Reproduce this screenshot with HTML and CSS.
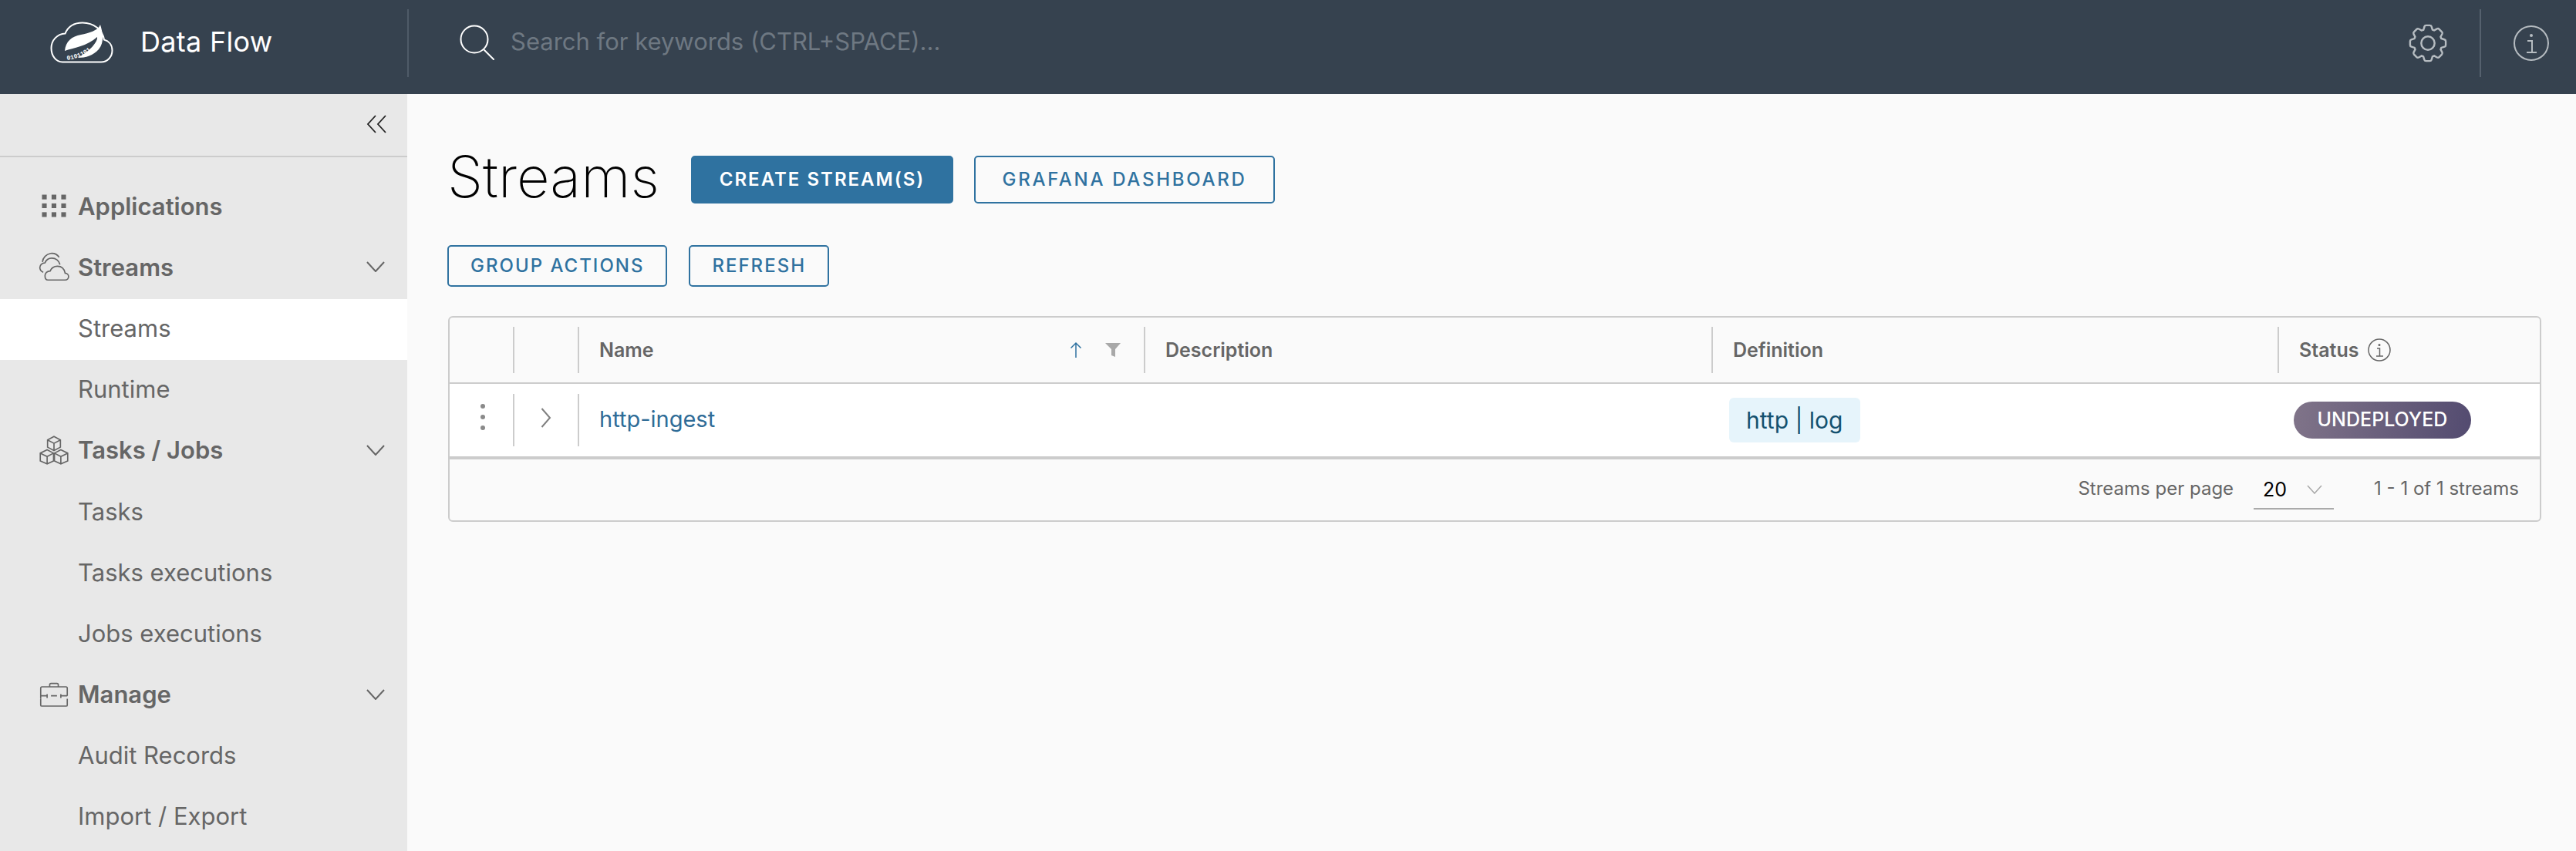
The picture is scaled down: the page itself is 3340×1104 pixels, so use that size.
FILE: index.html
```html
<!DOCTYPE html>
<html lang="en">
<head>
    <meta charset="UTF-8">
    <meta name="viewport" content="width=device-width, initial-scale=1.0">
    <title>Data Flow - Streams</title>
    <link rel="stylesheet" href="styles.css">
</head>
<body>
    <header class="topbar">
        <div class="brand">
            <svg class="brandLogo" viewBox="0 0 82 54" fill="none">
                <path d="M16 52.500H66C74 52.500 80.500 46 80.500 37.500C80.500 30 76 25 70 23.500C68 11 57 1.500 42 1.500C31 1.500 23 7 19.500 15.500C9 16 1.500 24.500 1.500 34.500C1.500 45 8 52.500 16 52.500Z" stroke="#fff" stroke-width="2"/>
                <path d="M65 4C62 12 50 15 40 17C28 19 20 26 19 38C30 34 48 32 61 20C62 26 52 38 36 47C46 47 56 44 63 36C71 26 68 14 65 4Z" fill="#fff"/>
                <path id="logoCurve" d="M22 50C36 48 52 42 63 27"/>
                <text class="logoBits"><textPath href="#logoCurve">0101101</textPath></text>
            </svg>
            <span class="brandName">Data Flow</span>
        </div>
        <div class="search">
            <svg class="searchIcon" viewBox="0 0 46 46" fill="none" stroke="#fff" stroke-width="2">
                <circle cx="19" cy="19" r="17.500"/>
                <path d="M32 33L44 45" stroke-linecap="round"/>
            </svg>
            <span class="searchText">Search for keywords (CTRL+SPACE)...</span>
        </div>
        <div class="topIcons">
            <div class="topIcon">
                <svg class="gearIcon" viewBox="0 0 36 36" fill="none" stroke="#b6bcc1" stroke-width="1.700">
                    <circle cx="18" cy="18" r="6"/>
                    <path d="M32.800 14.700L30 13.800L29.400 12.300L30.800 9.700C31.100 9.100 31 8.300 30.500 7.800L28.100 5.400C27.600 4.900 26.800 4.800 26.200 5.100L23.600 6.500L22.100 5.900L21.200 3.100C21 2.500 20.400 2 19.700 2H16.300C15.600 2 15 2.500 14.900 3.200L14 6C13.400 6.100 12.900 6.300 12.400 6.600L9.800 5.200C9.200 4.900 8.400 5 7.900 5.500L5.500 7.900C5 8.400 4.900 9.200 5.200 9.800L6.500 12.300C6.300 12.800 6.100 13.400 5.900 13.900L3.100 14.800C2.500 15 2 15.600 2 16.300V19.700C2 20.400 2.500 21 3.200 21.200L6 22.100L6.600 23.600L5.200 26.200C4.900 26.800 5 27.600 5.500 28.100L7.900 30.500C8.400 31 9.200 31.100 9.800 30.800L12.400 29.400L13.900 30L14.800 32.900C15 33.500 15.600 34 16.300 34H19.700C20.400 34 21 33.500 21.200 32.900L22.100 30L23.600 29.400L26.200 30.800C26.800 31.100 27.600 31 28.100 30.500L30.500 28.100C31 27.600 31.100 26.800 30.800 26.200L29.400 23.600L30 22.100L32.900 21.200C33.500 21 34 20.400 34 19.700V16.300C34 15.600 33.500 14.900 32.800 14.700Z"/>
                </svg>
            </div>
            <div class="topIcon infoSlot">
                <svg class="infoIcon" viewBox="0 0 46 46" fill="none" stroke="#b6bcc1" stroke-width="2">
                    <circle cx="23" cy="23" r="22"/>
                    <path d="M18 20H24V35M17 35H30"/>
                    <circle cx="23" cy="13" r="2" fill="#b6bcc1" stroke="none"/>
                </svg>
            </div>
        </div>
    </header>

    <div class="layout">
        <nav class="sidebar">
            <div class="collapseRow">
                <svg class="collapseIcon" viewBox="0 0 26 24" fill="none" stroke="#222" stroke-width="1.800">
                    <path d="M12 1L2 12L12 23M25 1L15 12L25 23"/>
                </svg>
            </div>
            <div class="navList">
                <div class="navItem navGroup">
                    <svg class="navIcon" viewBox="0 0 36 36" fill="#666">
                        <rect x="4" y="5" width="5.500" height="5.500"/><rect x="15.200" y="5" width="5.500" height="5.500"/><rect x="26.500" y="5" width="5.500" height="5.500"/>
                        <rect x="4" y="15.200" width="5.500" height="5.500"/><rect x="15.200" y="15.200" width="5.500" height="5.500"/><rect x="26.500" y="15.200" width="5.500" height="5.500"/>
                        <rect x="4" y="25.500" width="5.500" height="5.500"/><rect x="15.200" y="25.500" width="5.500" height="5.500"/><rect x="26.500" y="25.500" width="5.500" height="5.500"/>
                    </svg>
                    <span>Applications</span>
                </div>
                <div class="navItem navGroup">
                    <svg class="navIcon" viewBox="0 0 36 36" fill="none" stroke="#666" stroke-width="1.500">
                        <path d="M11 33.500H31C33.500 33.500 35 31.500 35 29.500C35 27.500 33.500 25.500 31 25.500C30 20.500 26.500 17.500 22 17.500C18 17.500 15 19.500 13.500 23C10 23 7.500 25.500 7.500 28.500C7.500 31.500 9 33.500 11 33.500Z"/>
                        <path d="M5.500 24.500C3 23.500 1.500 21.500 1.500 19C1.500 16 4 13.500 7.500 13.500C9 9.500 12 8 15.500 8C20 8 24 11 25 15.500"/>
                        <path d="M4.500 12.500C5 7.500 9 3.500 14 2.500C18.500 2 22 4 24 7"/>
                    </svg>
                    <span>Streams</span>
                    <svg class="navChevron" viewBox="0 0 24 14" fill="none" stroke="#666" stroke-width="2"><path d="M1 1L12 13L23 1"/></svg>
                </div>
                <div class="navItem navSelected"><span>Streams</span></div>
                <div class="navItem"><span>Runtime</span></div>
                <div class="navItem navGroup">
                    <svg class="navIcon" viewBox="0 0 36 36" fill="none" stroke="#666" stroke-width="1.500">
                        <path d="M18 2L25.500 6V14.500L18 18.500L10.500 14.500V6Z"/>
                        <path d="M10.500 6L18 10L25.500 6M18 10V18.500"/>
                        <path d="M10 17.500L17.500 21.500V30.500L10 34L2 30.500V21.500Z"/>
                        <path d="M2 21.500L10 25.500L17.500 21.500M10 25.500V34"/>
                        <path d="M26 17.500L34 21.500V30.500L26 34L18.500 30.500V21.500Z"/>
                        <path d="M18.500 21.500L26 25.500L34 21.500M26 25.500V34"/>
                    </svg>
                    <span>Tasks / Jobs</span>
                    <svg class="navChevron" viewBox="0 0 24 14" fill="none" stroke="#666" stroke-width="2"><path d="M1 1L12 13L23 1"/></svg>
                </div>
                <div class="navItem"><span>Tasks</span></div>
                <div class="navItem"><span>Tasks executions</span></div>
                <div class="navItem"><span>Jobs executions</span></div>
                <div class="navItem navGroup">
                    <svg class="navIcon" viewBox="0 0 36 36" fill="none" stroke="#666" stroke-width="1.500">
                        <path d="M13 9V6.500C13 5.500 13.500 5 14.500 5H21.500C22.500 5 23 5.500 23 6.500V9"/>
                        <path d="M2.500 23V10.500C2.500 9.500 3 9 4 9H32C33 9 33.500 9.500 33.500 10.500V19.500"/>
                        <path d="M2.500 19.500H10M10 17.500V22M14.500 19.500H21.500M26 17.500V22M26 19.500H33.500"/>
                        <path d="M2.500 23V30.500C2.500 31 3 31.500 4 31.500H32C33 31.500 33.500 31 33.500 30.500V23"/>
                    </svg>
                    <span>Manage</span>
                    <svg class="navChevron" viewBox="0 0 24 14" fill="none" stroke="#666" stroke-width="2"><path d="M1 1L12 13L23 1"/></svg>
                </div>
                <div class="navItem"><span>Audit Records</span></div>
                <div class="navItem"><span>Import / Export</span></div>
            </div>
        </nav>

        <main class="content">
            <div class="titleRow">
                <h1 class="pageTitle">Streams</h1>
                <button class="btn btnPrimary">CREATE STREAM(S)</button>
                <button class="btn btnOutline btnWide">GRAFANA DASHBOARD</button>
            </div>
            <div class="actionRow">
                <button class="btn btnOutline btnSmall">GROUP ACTIONS</button>
                <button class="btn btnOutline btnSmall">REFRESH</button>
            </div>

            <div class="grid">
                <div class="gridRow gridHead">
                    <div class="cell"></div>
                    <div class="cell cellRule"></div>
                    <div class="cell cellRule">
                        <span class="headLabel">Name</span>
                        <svg class="sortIcon" viewBox="0 0 16 22" fill="none" stroke="#2f72a0" stroke-width="1.500"><path d="M8 21V2M1.500 8.500L8 2L14.500 8.500"/></svg>
                        <svg class="filterIcon" viewBox="0 0 20 18" fill="#a8a8a8"><path d="M0 0H20L13 8V18L8 16V8Z"/></svg>
                    </div>
                    <div class="cell cellRule"><span class="headLabel">Description</span></div>
                    <div class="cell cellRule"><span class="headLabel">Definition</span></div>
                    <div class="cell cellRule">
                        <span class="headLabel">Status</span>
                        <svg class="statusInfo" viewBox="0 0 30 30" fill="none" stroke="#666" stroke-width="1.500">
                            <circle cx="15" cy="15" r="14"/>
                            <path d="M12 13H15.500V23M11 23H20"/>
                            <circle cx="15" cy="8.500" r="1.500" fill="#666" stroke="none"/>
                        </svg>
                    </div>
                </div>
                <div class="gridRow gridBody">
                    <div class="cell cellDots"><i></i><i></i><i></i></div>
                    <div class="cell cellRule cellExpand">
                        <svg class="expandIcon" viewBox="0 0 14 26" fill="none" stroke="#808080" stroke-width="2"><path d="M1.500 1L12 13L1.500 25"/></svg>
                    </div>
                    <div class="cell cellRule"><a class="streamLink">http-ingest</a></div>
                    <div class="cell"></div>
                    <div class="cell cellChip"><span class="dslChip">http | log</span></div>
                    <div class="cell"><span class="statusBadge">UNDEPLOYED</span></div>
                </div>
                <div class="gridFoot">
                    <span class="footText">Streams per page</span>
                    <div class="pageSelect">
                        <span>20</span>
                        <svg class="selectChevron" viewBox="0 0 20 12" fill="none" stroke="#a8a8a8" stroke-width="1.500"><path d="M1 1L10 11L19 1"/></svg>
                    </div>
                    <span class="footText">1 - 1 of 1 streams</span>
                </div>
            </div>
        </main>
    </div>
</body>
</html>
```

FILE: styles.css
```css
* {
    box-sizing: border-box;
}
body {
    margin: 0;
    padding: 0;
    height: 100vh;
    overflow: hidden;
    font-family: "Inter", "Liberation Sans", sans-serif;
    background-color: #fafafa;
}

/* top bar */
.topbar {
    display: flex;
    align-items: center;
    height: 122px;
    padding-bottom: 10px;
    background-color: #36424f;
}
.brand {
    display: flex;
    align-items: center;
    width: 530px;
    height: 88px;
    padding-left: 65px;
    border-right: 2px solid #4f5b68;
}
.brandLogo {
    width: 82px;
    height: 54px;
    margin-bottom: 2px;
}
.logoBits {
    font-family: "Liberation Mono", monospace;
    font-size: 8px;
    font-weight: bold;
    fill: #fff;
}
.brandName {
    margin-left: 35px;
    margin-bottom: 4px;
    color: #fff;
    font-size: 36px;
    letter-spacing: 0.3px;
}
.search {
    display: flex;
    align-items: center;
    flex: 1;
    padding-left: 66px;
}
.searchIcon {
    width: 46px;
    height: 46px;
    margin-bottom: 2px;
}
.searchText {
    margin-left: 20px;
    margin-bottom: 6px;
    color: #6e7882;
    font-size: 31px;
}
.topIcons {
    display: flex;
    align-items: center;
    height: 88px;
}
.topIcon {
    display: flex;
    align-items: center;
    justify-content: center;
    width: 76px;
    margin-right: 29px;
}
.infoSlot {
    width: 125px;
    height: 88px;
    margin-right: 0;
    padding: 0 0 0 6px;
    border-left: 2px solid #56616e;
}
.gearIcon {
    width: 52px;
    height: 52px;
}
.infoIcon {
    width: 46px;
    height: 46px;
}

/* sidebar */
.layout {
    display: flex;
    height: 982px;
}
.sidebar {
    width: 528px;
    background-color: #e8e8e8;
    flex-shrink: 0;
}
.collapseRow {
    display: flex;
    align-items: center;
    justify-content: flex-end;
    height: 82px;
    padding-right: 27px;
    padding-bottom: 2px;
    border-bottom: 2px solid #cccccc;
}
.collapseIcon {
    width: 26px;
    height: 24px;
}
.navList {
    padding-top: 25.5px;
}
.navItem {
    display: flex;
    align-items: center;
    height: 79.2px;
    padding-left: 101px;
    padding-bottom: 4px;
    color: #666;
    font-size: 31px;
}
.navGroup {
    padding-left: 50px;
    padding-right: 29px;
    font-weight: 600;
}
.navSelected {
    background-color: #fff;
}
.navIcon {
    width: 40px;
    height: 40px;
    margin-right: 11px;
    flex-shrink: 0;
}
.navChevron {
    width: 24px;
    height: 14px;
    margin-left: auto;
}

/* main */
.content {
    flex: 1;
    padding: 0 45px 0 52px;
}
.titleRow {
    display: flex;
    align-items: center;
    height: 62px;
    margin-top: 80px;
}
.pageTitle {
    margin: 0 42px 9px 0;
    width: 274px;
    color: #000;
    font-size: 74px;
    font-weight: 200;
    white-space: nowrap;
}
.btn {
    display: flex;
    align-items: center;
    justify-content: center;
    height: 62px;
    padding: 0 0 2px;
    border-radius: 5px;
    font-family: inherit;
    font-size: 24px;
    font-weight: 500;
    letter-spacing: 2px;
    white-space: nowrap;
}
.btnPrimary {
    width: 340px;
    margin-right: 27px;
    color: #fff;
    background-color: #2f72a0;
    border: 2px solid #2f72a0;
    font-weight: 600;
}
.btnOutline {
    color: #2f72a0;
    background-color: transparent;
    border: 2px solid #2f72a0;
}
.btnWide {
    width: 390px;
    letter-spacing: 2.7px;
}
.actionRow {
    display: flex;
    gap: 28px;
    margin-top: 54px;
}
.btnSmall {
    height: 54px;
    padding: 0 28px 2px;
}

/* table */
.grid {
    margin-top: 38px;
    margin-left: 1px;
    border: 2px solid #cccccc;
    border-radius: 6px;
}
.gridRow {
    display: grid;
    grid-template-columns: 82px 84px 734px 736px 734px 1fr;
    align-items: center;
}
.gridHead {
    height: 86px;
    border-bottom: 2px solid #cccccc;
}
.gridBody {
    height: 98px;
    background-color: #fff;
    border-bottom: 4px solid #cccccc;
}
.cell {
    display: flex;
    align-items: center;
    height: 60px;
    padding-left: 26px;
}
.gridBody .cell {
    height: 68px;
}
.cellRule {
    border-left: 2px solid #cccccc;
}
.headLabel {
    color: #666;
    font-size: 25px;
    font-weight: 600;
}
.sortIcon {
    width: 16px;
    height: 22px;
    margin-left: auto;
}
.filterIcon {
    width: 20px;
    height: 18px;
    margin-left: 30px;
    margin-right: 30px;
}
.statusInfo {
    width: 30px;
    height: 30px;
    margin-left: 12px;
}
.gridBody .cellDots {
    flex-direction: column;
    justify-content: center;
    gap: 8px;
    padding-left: 40px;
    padding-bottom: 8px;
    align-items: flex-start;
}
.cellDots i {
    width: 6px;
    height: 6px;
    border-radius: 50%;
    background-color: #8a8a8a;
}
.gridBody .cellExpand {
    padding-left: 34px;
    padding-bottom: 6px;
}
.expandIcon {
    width: 14px;
    height: 26px;
}
.streamLink {
    margin-bottom: 4px;
    color: #2f6c97;
    font-size: 29px;
}
.gridBody .cellChip {
    padding-left: 23px;
}
.dslChip {
    display: flex;
    align-items: center;
    height: 58px;
    padding: 0 22px;
    border-radius: 6px;
    color: #14516f;
    background-color: #e6f4fb;
    font-size: 30px;
}
.statusBadge {
    display: flex;
    align-items: center;
    justify-content: center;
    width: 230px;
    height: 48px;
    margin-left: -5px;
    padding-bottom: 2px;
    border-radius: 24px;
    color: #fff;
    background: linear-gradient(100deg, #807489, #534b70);
    font-size: 25px;
    font-weight: 500;
}
.gridFoot {
    display: flex;
    align-items: center;
    justify-content: flex-end;
    height: 79px;
    padding-right: 27px;
}
.footText {
    margin-bottom: 4px;
    color: #666;
    font-size: 24px;
}
.pageSelect {
    display: flex;
    align-items: center;
    width: 104px;
    height: 50px;
    margin: 0 52px 0 26px;
    padding: 0 0 0 12px;
    border-bottom: 2px solid #aaaaaa;
    color: #000;
    font-size: 25px;
}
.selectChevron {
    width: 20px;
    height: 12px;
    margin-left: 26px;
}
```
